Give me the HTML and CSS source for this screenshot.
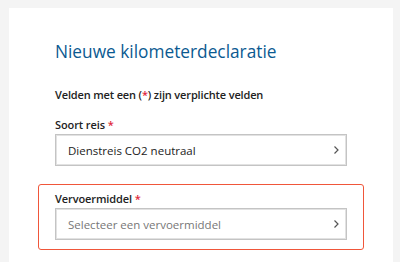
FILE: index.html
```html
<!DOCTYPE html>
<html lang="nl">
<head>
    <meta charset="UTF-8">
    <meta name="viewport" content="width=device-width, initial-scale=1.0">
    <title>Nieuwe kilometerdeclaratie</title>
    <link rel="stylesheet" href="styles.css">
</head>
<body>

    <div class="card">
        <h1 class="title">Nieuwe kilometerdeclaratie</h1>
        <p class="intro">Velden met een (<span class="req">*</span>) zijn verplichte velden</p>

        <div class="field">
            <label class="label">Soort reis <span class="req">*</span></label>
            <div class="select">
                <span class="value">Dienstreis CO2 neutraal</span>
                <svg class="chevron" width="8" height="10" viewBox="0 0 8 10"><path d="M2.5 1.5 L6 5 L2.5 8.5" fill="none" stroke="#555" stroke-width="1.2"/></svg>
            </div>
        </div>

        <div class="field field-error">
            <label class="label">Vervoermiddel <span class="req">*</span></label>
            <div class="select">
                <span class="value placeholder">Selecteer een vervoermiddel</span>
                <svg class="chevron" width="8" height="10" viewBox="0 0 8 10"><path d="M2.5 1.5 L6 5 L2.5 8.5" fill="none" stroke="#555" stroke-width="1.2"/></svg>
            </div>
        </div>
    </div>

</body>
</html>
```

FILE: styles.css
```css
body {
    margin: 0;
    padding: 8px 7px 0 9px;
    background: #f4f4f4;
    font-family: 'Open Sans', sans-serif;
    color: #222;
    height: 262px;
    box-sizing: border-box;
    overflow: hidden;
}

.card {
    background: #fff;
    height: 100%;
    padding: 32px 46px 0 46px;
    box-sizing: border-box;
}

.title {
    margin: 0 0 23px 0;
    font-size: 17.3px;
    font-weight: 400;
    color: #0b5a91;
    line-height: 24px;
}

.intro {
    margin: 0 0 14px 0;
    font-size: 11px;
    font-weight: 600;
    letter-spacing: -0.15px;
    line-height: 16px;
}

.req {
    color: #e0283c;
}

.field {
    margin-bottom: 18px;
}

.label {
    display: block;
    font-size: 11px;
    font-weight: 600;
    letter-spacing: -0.1px;
    line-height: 16px;
    margin-bottom: 1px;
}

.select {
    height: 32px;
    border: 1px solid #c4c4c4;
    box-shadow: inset 0 0 0 1px #e2e2e2;
    display: flex;
    align-items: center;
    justify-content: space-between;
    padding: 0 6px 0 12px;
    box-sizing: border-box;
    width: 292px;
}

.value {
    font-size: 11.5px;
    color: #222;
}

.placeholder {
    color: #777;
}

.field-error {
    margin: 0 -17px;
    padding: 6px 16px 9px 16px;
    border: 1px solid #f0563a;
    border-radius: 3px;
}
```
